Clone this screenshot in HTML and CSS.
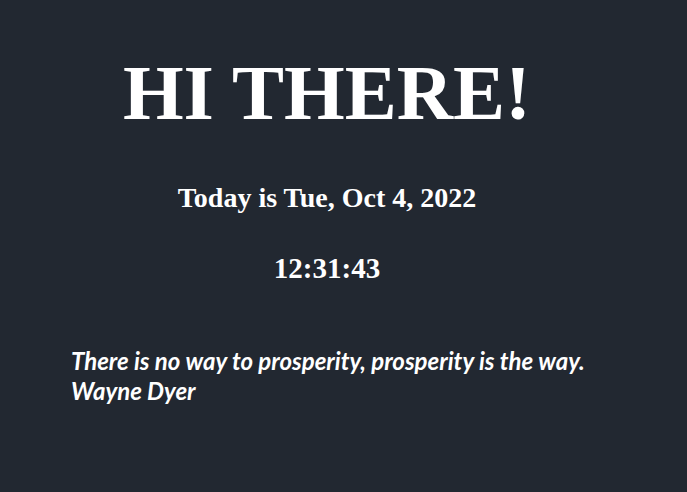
FILE: index.html
```html
<!DOCTYPE html>
<html lang="en">
<head>
<meta charset="utf-8">
<title>Hi there</title>
<link rel="stylesheet" href="styles.css">
</head>
<body>
  <main class="page">
    <h1 class="greeting">HI THERE!</h1>
    <p class="date">Today is Tue, Oct 4, 2022</p>
    <p class="clock">12:31:43</p>
    <blockquote class="quote">
      <p class="quote-text">There is no way to prosperity, prosperity is the way.</p>
      <p class="quote-author">Wayne Dyer</p>
    </blockquote>
  </main>
</body>
</html>
```

FILE: styles.css
```css
html, body {
  margin: 0;
  padding: 0;
  height: 100%;
}
body {
  background: #222831;
  color: #ffffff;
}
.page {
  width: 654px;
  display: flex;
  flex-direction: column;
  align-items: center;
  padding-top: 48px;
}
.greeting {
  margin: 0;
  font-family: "Liberation Serif", "Times New Roman", serif;
  font-weight: 700;
  font-size: 78px;
  line-height: 90px;
  letter-spacing: 0;
}
.date {
  margin: 44px 0 0;
  font-family: "Liberation Serif", serif;
  font-weight: 700;
  font-size: 28px;
  line-height: 32px;
}
.clock {
  margin: 38px 0 0;
  font-family: "Liberation Serif", serif;
  font-weight: 700;
  font-size: 29px;
  line-height: 32px;
}
.quote {
  align-self: stretch;
  margin: 62px 0 0 71px;
  font-family: Lato, sans-serif;
  font-style: italic;
  font-weight: 700;
  font-size: 24px;
  line-height: 30px;
}
.quote-text, .quote-author {
  margin: 0;
}
```
